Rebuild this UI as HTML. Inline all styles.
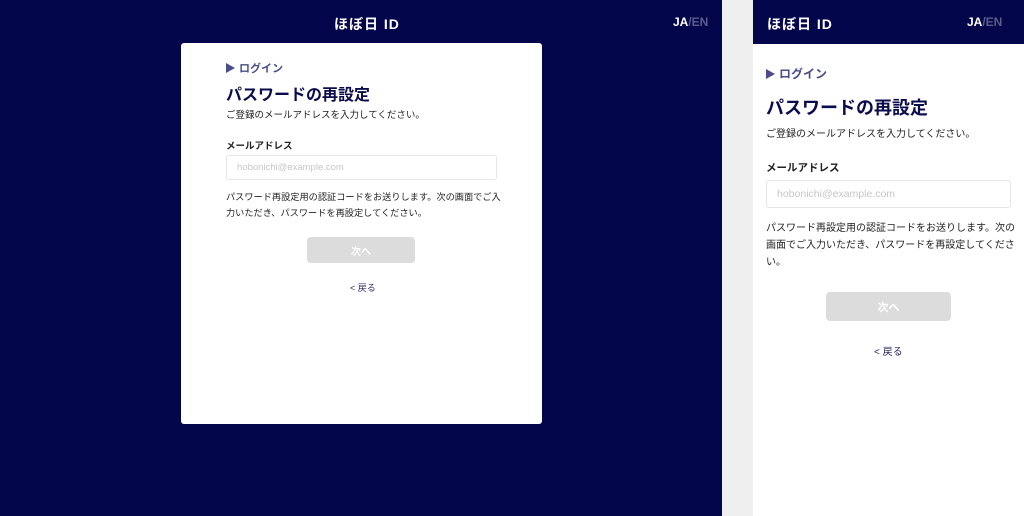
<!DOCTYPE html>
<html><head><meta charset="utf-8"><style>
*{margin:0;padding:0;box-sizing:border-box}
body{width:1024px;height:516px;overflow:hidden;position:relative;font-family:"Liberation Sans","Noto Sans CJK JP",sans-serif;background:#fff}
.a{position:absolute}
.logo{color:#fff;font-weight:700;font-size:14px;letter-spacing:1px}
.lang{color:#fff;font-weight:700;font-size:12px}
.lang span{color:#5b5c8c}
.crumb{color:#4b4d8a;font-weight:700}
.tri{display:inline-block;width:0;height:0;border-left:9px solid #4b4d8a;border-top:5px solid transparent;border-bottom:5px solid transparent;margin-right:4px;vertical-align:-1px}
.t{color:#0b0c4c;font-weight:700}
.tx{color:#222}
.inp{border:1px solid #e6e6e6;border-radius:3px;color:#c6c6c6;padding-left:10px;display:flex;align-items:center}
.btn{background:#dcdcdc;border-radius:4px;color:#fff;font-weight:700;display:flex;align-items:center;justify-content:center}
.back{color:#2a2b60}
</style></head><body>
<div class="a" style="left:0;top:0;width:722px;height:516px;background:#03064a"></div>
<div class="a" style="left:722px;top:0;width:31px;height:516px;background:#efefef"></div>
<div class="a logo" style="left:334px;top:14px">ほぼ日 ID</div>
<div class="a lang" style="left:673px;top:15px">JA<span>/EN</span></div>
<div class="a" style="left:181px;top:43px;width:361px;height:381px;background:#fff;border-radius:3px"></div>
<div class="a crumb" style="left:226px;top:60px;font-size:11px"><i class="tri"></i>ログイン</div>
<div class="a t" style="left:226px;top:81px;font-size:16px">パスワードの再設定</div>
<div class="a tx" style="left:226px;top:107px;font-size:9.5px">ご登録のメールアドレスを入力してください。</div>
<div class="a tx" style="left:226px;top:138px;font-size:9.5px;font-weight:700">メールアドレス</div>
<div class="a inp" style="left:226px;top:155px;width:271px;height:25px;font-size:9.5px">hobonichi@example.com</div>
<div class="a tx" style="left:226px;top:189px;font-size:9.2px;line-height:16px;width:281px">パスワード再設定用の認証コードをお送りします。次の画面でご入力いただき、パスワードを再設定してください。</div>
<div class="a btn" style="left:307px;top:237px;width:108px;height:26px;font-size:10px">次へ</div>
<div class="a back" style="left:350px;top:281px;font-size:9px">&lt; 戻る</div>

<div class="a" style="left:753px;top:0;width:271px;height:44px;background:#03064a"></div>
<div class="a logo" style="left:767px;top:14px">ほぼ日 ID</div>
<div class="a lang" style="left:967px;top:15px">JA<span>/EN</span></div>
<div class="a crumb" style="left:766px;top:65px;font-size:12px"><i class="tri"></i>ログイン</div>
<div class="a t" style="left:766px;top:94px;font-size:18px">パスワードの再設定</div>
<div class="a tx" style="left:766px;top:125px;font-size:10px">ご登録のメールアドレスを入力してください。</div>
<div class="a tx" style="left:766px;top:160px;font-size:10.5px;font-weight:700">メールアドレス</div>
<div class="a inp" style="left:766px;top:180px;width:245px;height:28px;font-size:10.5px">hobonichi@example.com</div>
<div class="a tx" style="left:766px;top:220px;font-size:10px;line-height:17px;width:250px">パスワード再設定用の認証コードをお送りします。次の画面でご入力いただき、パスワードを再設定してください。</div>
<div class="a btn" style="left:826px;top:292px;width:125px;height:29px;font-size:11px">次へ</div>
<div class="a back" style="left:874px;top:343px;font-size:10px">&lt; 戻る</div>
</body></html>
